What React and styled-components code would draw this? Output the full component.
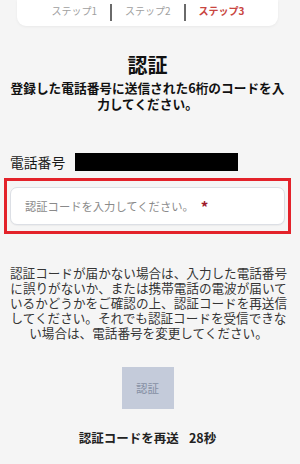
import React from "react";
import styled, { createGlobalStyle } from "styled-components";

const Global = createGlobalStyle`
  html, body { margin: 0; padding: 0; background: #f5f5f5; }
  body { font-family: "Noto Sans CJK JP", "Noto Sans", sans-serif; color: #111; }
`;

const Page = styled.div`
  width: 295px;
  display: flex;
  flex-direction: column;
  align-items: stretch;
`;

const StepCard = styled.div`
  margin: 0 17px;
  height: 26px;
  background: #fff;
  border-radius: 0 0 9px 9px;
  box-shadow: 0 1px 3px rgba(0, 0, 0, 0.05);
  display: flex;
  align-items: center;
  justify-content: center;
  gap: 13px;
  padding-bottom: 5px;
  box-sizing: border-box;
  padding-left: 1px;
`;

const Step = styled.span`
  font-size: 10px;
  line-height: 12px;
  color: ${(p) => (p.$active ? "#c9463f" : "#a0a0a0")};
  font-weight: ${(p) => (p.$active ? 700 : 400)};
  white-space: nowrap;
`;

const Divider = styled.span`
  width: 2px;
  height: 17px;
  background: #6a6a6a;
  margin-top: 4px;
`;

const Title = styled.h1`
  margin: 27px 0 0;
  font-size: 20px;
  line-height: 24px;
  font-weight: 700;
  text-align: center;
`;

const Subtitle = styled.p`
  margin: 3px 0 0;
  font-size: 12.7px;
  line-height: 16px;
  font-weight: 700;
  text-align: center;
`;

const PhoneRow = styled.div`
  margin-top: 41px;
  padding-left: 10px;
  display: flex;
  align-items: center;
  height: 18px;
`;

const PhoneLabel = styled.span`
  font-size: 13.8px;
  color: #1a1a1a;
  white-space: nowrap;
`;

const Masked = styled.span`
  margin-left: 10px;
  width: 163px;
  height: 18px;
  background: #000;
`;

const Highlight = styled.div`
  margin: 7px 4px 0;
  border: 3px solid #e3222a;
  padding: 6px 3px;
`;

const CodeField = styled.div`
  height: 38px;
  box-sizing: border-box;
  border: 1px solid #dcdfe5;
  border-radius: 7px;
  background: #fff;
  display: flex;
  align-items: center;
  padding-left: 14px;
  box-shadow: 0 1px 1px rgba(0, 0, 0, 0.04);
`;

const Placeholder = styled.span`
  font-size: 11.3px;
  color: #8a8a8a;
`;

const Required = styled.span`
  margin-left: 7px;
  font-size: 15px;
  font-weight: 700;
  color: #9e1a2b;
  line-height: 1;
`;

const Notice = styled.p`
  margin: 31px 0 0;
  padding: 0 7px 0 9px;
  font-size: 12.6px;
  line-height: 15px;
  color: #353535;
  text-align: center;
`;

const VerifyButton = styled.button`
  margin: 27px auto 0;
  width: 52px;
  height: 42px;
  border: none;
  background: #c4cbda;
  color: #8690a4;
  font-family: inherit;
  font-size: 11.5px;
  padding: 0;
`;

const Resend = styled.div`
  margin-top: 20px;
  text-align: center;
  font-size: 12.5px;
  line-height: 18px;
  font-weight: 700;
  color: #222;
`;

const Timer = styled.span`
  margin-left: 10px;
`;

export default function App() {
  return (
    <>
      <Global />
      <Page>
        <StepCard>
          <Step>ステップ1</Step>
          <Divider />
          <Step>ステップ2</Step>
          <Divider />
          <Step $active>ステップ3</Step>
        </StepCard>
        <Title>認証</Title>
        <Subtitle>
          登録した電話番号に送信された6桁のコードを入
          <br />
          力してください。
        </Subtitle>
        <PhoneRow>
          <PhoneLabel>電話番号</PhoneLabel>
          <Masked />
        </PhoneRow>
        <Highlight>
          <CodeField>
            <Placeholder>認証コードを入力してください。</Placeholder>
            <Required>*</Required>
          </CodeField>
        </Highlight>
        <Notice>
          認証コードが届かない場合は、入力した電話番号
          <br />
          に誤りがないか、または携帯電話の電波が届いて
          <br />
          いるかどうかをご確認の上、認証コードを再送信
          <br />
          してください。それでも認証コードを受信できな
          <br />
          い場合は、電話番号を変更してください。
        </Notice>
        <VerifyButton disabled>認証</VerifyButton>
        <Resend>
          認証コードを再送<Timer>28秒</Timer>
        </Resend>
      </Page>
    </>
  );
}
